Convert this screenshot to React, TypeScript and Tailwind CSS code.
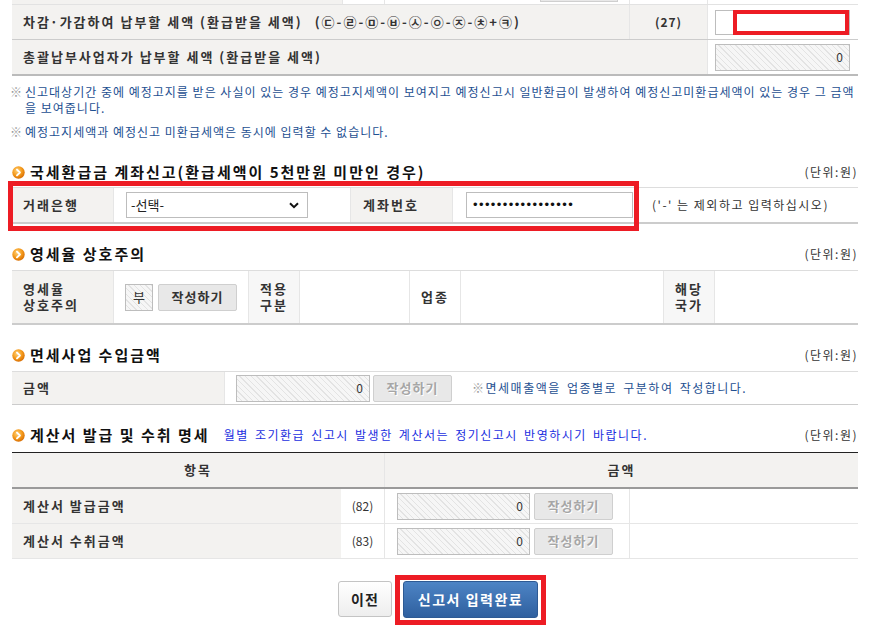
import React from "react";

const hatch =
  "bg-[image:repeating-linear-gradient(45deg,#f6f6f6_0px,#f6f6f6_3px,#e3e3e3_3px,#e3e3e3_4px)]";

function Bullet({ id }: { id: string }) {
  return (
    <svg width="13" height="13" viewBox="0 0 13 13" className="shrink-0">
      <defs>
        <radialGradient id={id} cx="40%" cy="35%" r="70%">
          <stop offset="0" stopColor="#ffd27a" />
          <stop offset="0.55" stopColor="#f49a1c" />
          <stop offset="1" stopColor="#d66a00" />
        </radialGradient>
      </defs>
      <circle cx="6.5" cy="6.5" r="6.2" fill={`url(#${id})`} />
      <path d="M5 3.6 L7.9 6.5 L5 9.4" stroke="#fff" strokeWidth="1.9" fill="none" strokeLinecap="round" strokeLinejoin="round" />
    </svg>
  );
}

function Title({ id, children, extra }: { id: string; children: React.ReactNode; extra?: React.ReactNode }) {
  return (
    <div className="flex h-[20px] items-center justify-between">
      <div className="flex items-center gap-[5px]">
        <Bullet id={id} />
        <span className="whitespace-nowrap text-[15px] font-bold tracking-[2px] text-[#111]">{children}</span>
        {extra}
      </div>
      <span className="whitespace-nowrap text-[12px] tracking-[1.5px] text-[#333]">(단위:원)</span>
    </div>
  );
}

function WriteBtn({ disabled }: { disabled?: boolean }) {
  return (
    <div
      className={`flex h-[27px] w-[79px] items-center justify-center rounded-[2px] border border-[#cfcfcf] bg-[#e8e8e8] text-[13px] font-bold tracking-[1px] ${
        disabled ? "text-[#a6a6a6] [text-shadow:1px_1px_0_#fff]" : "text-[#333]"
      }`}
    >
      작성하기
    </div>
  );
}

function HatchInput({ w, value }: { w: string; value: string }) {
  return (
    <div className={`flex h-[27px] ${w} items-center justify-end border border-[#bdbdbd] pr-[6px] text-[12px] text-[#333] ${hatch}`}>
      {value}
    </div>
  );
}

export default function App() {
  return (
    <div className="relative w-[871px] overflow-hidden bg-white font-['Noto_Sans_CJK_KR',sans-serif] text-[#333]">
      <div className="ml-[12px] w-[846px]">
        {/* top table */}
        <div className="flex h-[5px] border-b border-[#e2e2e2]">
          <div className="w-[330px] bg-[#f3f2f0]" />
          <div className="w-[42px] border-l border-[#e6e6e6]" />
          <div className="relative w-[245px] border-l border-[#e6e6e6]">
            <div className="absolute left-[155px] top-0 h-[2px] w-[78px] border-x border-b border-[#cfcfcf] bg-[#e8e8e8]" />
          </div>
          <div className="w-[78px] border-l border-[#e6e6e6]" />
          <div className="w-[151px] border-l border-[#e6e6e6]" />
        </div>
        <div className="flex h-[35px] border-b border-[#cccccc]">
          <div className="flex w-[617px] items-center whitespace-nowrap bg-[#f3f2f0] pl-[11px] text-[13px] font-bold tracking-[2px] text-[#333]">
            <span>
              차감<span className="-ml-[1px] mr-[0px]">·</span>가감하여 납부할 세액 (환급받을 세액)
            </span>
            <span className="ml-[12px]">(㉢-㉣-㉤-㉥-㉦-㉧-㉨-㉩+㉪)</span>
          </div>
          <div className="flex w-[78px] items-center justify-center border-l border-[#e6e6e6] bg-[#f3f2f0] text-[12px] font-bold tracking-[1px]">
            (27)
          </div>
          <div className="relative flex w-[151px] items-center border-l border-[#e6e6e6] pl-[7px]">
            <div className="h-[25px] w-[135px] border border-[#bdbdbd] bg-white" />
            <div className="absolute left-[25px] top-[5px] h-[25px] w-[116px] border-[4px] border-[#ed1c24]" />
          </div>
        </div>
        <div className="flex h-[36px] border-b-2 border-[#bbbbbb]">
          <div className="flex w-[695px] items-center whitespace-nowrap bg-[#f3f2f0] pl-[11px] text-[13px] font-bold tracking-[2px] text-[#333]">
            총괄납부사업자가 납부할 세액 (환급받을 세액)
          </div>
          <div className="flex w-[151px] items-center border-l border-[#e6e6e6] pl-[7px]">
            <HatchInput w="w-[135px]" value="0" />
          </div>
        </div>

        {/* notes */}
        <div className="-ml-[2px] mt-[8px] text-[12px] leading-[16px] tracking-[1px] text-[#1d4f91]">
          <div className="flex whitespace-nowrap">
            <span className="w-[15px] shrink-0 tracking-normal text-[#9a9a9a]">※</span>
            <span>
              신고대상기간 중에 예정고지를 받은 사실이 있는 경우 예정고지세액이 보여지고 예정신고시 일반환급이 발생하여 예정신고미환급세액이 있는 경우 그 금액
            </span>
          </div>
          <div className="pl-[15px]">을 보여줍니다.</div>
          <div className="mt-[8px] flex whitespace-nowrap">
            <span className="w-[15px] shrink-0 tracking-normal text-[#9a9a9a]">※</span>
            <span>예정고지세액과 예정신고 미환급세액은 동시에 입력할 수 없습니다.</span>
          </div>
        </div>

        {/* section 1 */}
        <div className="mt-[22px]">
          <Title id="b1">국세환급금 계좌신고(환급세액이 5천만원 미만인 경우)</Title>
        </div>
        <div className="relative mt-[5px]">
          <div className="flex h-[37px] border-b-2 border-t border-b-[#cccccc] border-t-[#dddddd]">
            <div className="flex w-[101px] items-center bg-[#f3f2f0] pl-[11px] text-[13px] font-bold tracking-[2px]">거래은행</div>
            <div className="flex w-[237px] items-center border-l border-[#e6e6e6] pl-[12px]">
              <div className="flex h-[26px] w-[182px] items-center justify-between border border-[#bdbdbd] bg-white pl-[4px] pr-[8px] text-[13px] text-[#222]">
                <span>-선택-</span>
                <svg width="10" height="7" viewBox="0 0 10 7">
                  <path d="M1 1.2 L5 5.2 L9 1.2" stroke="#111" strokeWidth="2" fill="none" />
                </svg>
              </div>
            </div>
            <div className="flex w-[102px] items-center border-l border-[#e6e6e6] bg-[#f3f2f0] pl-[12px] text-[13px] font-bold tracking-[2px]">
              계좌번호
            </div>
            <div className="flex w-[188px] items-center border-l border-[#e6e6e6] pl-[13px]">
              <div className="flex h-[26px] w-[167px] items-center border border-[#bdbdbd] bg-white pl-[6px] font-['Liberation_Sans',sans-serif] text-[13px] tracking-[1.4px] text-[#111]">
                •••••••••••••••••
              </div>
            </div>
            <div className="flex flex-1 items-center whitespace-nowrap pl-[12px] text-[12px] tracking-[1.5px] text-[#333]">
              ('-' 는 제외하고 입력하십시오)
            </div>
          </div>
          <div className="absolute -left-[4px] -top-[6px] h-[50px] w-[631px] border-[5px] border-[#ed1c24]" />
        </div>

        {/* section 2 */}
        <div className="mt-[20px]">
          <Title id="b2">영세율 상호주의</Title>
        </div>
        <div className="mt-[6px] flex h-[55px] border-b-2 border-t border-b-[#cccccc] border-t-[#dddddd] text-[13px] font-bold leading-[16px] tracking-[2px]">
          <div className="flex w-[101px] flex-col justify-center bg-[#f3f2f0] pl-[11px]">
            <span>영세율</span>
            <span>상호주의</span>
          </div>
          <div className="flex w-[135px] items-center gap-[5px] border-l border-[#e6e6e6] pl-[11px]">
            <div className={`flex h-[27px] w-[28px] items-center justify-center border border-[#bdbdbd] font-normal tracking-normal ${hatch}`}>부</div>
            <WriteBtn />
          </div>
          <div className="flex w-[51px] flex-col items-center justify-center border-l border-[#e6e6e6] bg-[#f7f7f7]">
            <span>적용</span>
            <span>구분</span>
          </div>
          <div className="w-[110px] border-l border-[#e6e6e6]" />
          <div className="flex w-[51px] items-center justify-center border-l border-[#e6e6e6]">업종</div>
          <div className="w-[203px] border-l border-[#e6e6e6]" />
          <div className="flex w-[51px] flex-col items-center justify-center border-l border-[#e6e6e6] bg-[#f7f7f7]">
            <span>해당</span>
            <span>국가</span>
          </div>
          <div className="flex-1 border-l border-[#e6e6e6]" />
        </div>

        {/* section 3 */}
        <div className="mt-[20px]">
          <Title id="b3">면세사업 수입금액</Title>
        </div>
        <div className="mt-[6px] flex h-[34px] border-y border-b-[#cccccc] border-t-[#dddddd]">
          <div className="flex w-[212px] items-center bg-[#f3f2f0] pl-[11px] text-[13px] font-bold tracking-[2px]">금액</div>
          <div className="flex flex-1 items-center border-l border-[#e6e6e6] pl-[11px]">
            <HatchInput w="w-[134px]" value="0" />
            <div className="ml-[3px]">
              <WriteBtn disabled />
            </div>
            <span className="ml-[20px] whitespace-nowrap text-[12px] tracking-[1.5px] [word-spacing:2px] text-[#1d4f91]">
              <span className="text-[#9a9a9a]">※</span>면세매출액을 업종별로 구분하여 작성합니다.
            </span>
          </div>
        </div>

        {/* section 4 */}
        <div className="mt-[20px]">
          <Title
            id="b4"
            extra={
              <span className="ml-[9px] whitespace-nowrap text-[12px] tracking-[1.5px] [word-spacing:2px] text-[#1b2fe0]">
                월별 조기환급 신고시 발생한 계산서는 정기신고시 반영하시기 바랍니다.
              </span>
            }
          >
            계산서 발급 및 수취 명세
          </Title>
        </div>
        <div className="mt-[7px] border-t border-[#222]">
          <div className="flex h-[36px] border-b-2 border-[#9a9a9a] bg-[#f3f2f0] text-[13px] font-bold tracking-[2px]">
            <div className="flex w-[372px] items-center justify-center">항목</div>
            <div className="flex flex-1 items-center justify-center border-l border-[#e6e6e6]">금액</div>
          </div>
          {[
            ["계산서 발급금액", "(82)"],
            ["계산서 수취금액", "(83)"],
          ].map(([label, code]) => (
            <div key={code} className="flex h-[35px] border-b border-[#e6e6e6]">
              <div className="flex w-[329px] items-center bg-[#f3f2f0] pl-[11px] text-[13px] font-bold tracking-[2px]">{label}</div>
              <div className="flex w-[43px] items-center justify-center text-[12px]">{code}</div>
              <div className="flex w-[245px] items-center gap-[4px] border-l border-[#e6e6e6] pl-[12px]">
                <HatchInput w="w-[133px]" value="0" />
                <WriteBtn disabled />
              </div>
              <div className="flex-1 border-l border-[#e6e6e6]" />
            </div>
          ))}
        </div>

        {/* buttons */}
        <div className="mt-[22px] flex justify-center gap-[11px] pl-[6px]">
          <div className="flex h-[36px] w-[54px] items-center justify-center rounded-[3px] border border-[#c4c4c4] bg-[linear-gradient(#ffffff,#eeeeee)] text-[14px] font-bold tracking-[1px] text-[#222]">
            이전
          </div>
          <div className="relative">
            <div className="flex h-[37px] w-[135px] items-center justify-center rounded-[3px] border border-[#2d5a94] bg-[linear-gradient(#4d84c5,#2f609f)] text-[14px] font-bold tracking-[1.5px] text-white">
              신고서 입력완료
            </div>
            <div className="absolute -left-[8px] -top-[6px] h-[50px] w-[151px] border-[5px] border-[#ed1c24]" />
          </div>
        </div>
        <div className="h-[20px]" />
      </div>
    </div>
  );
}
